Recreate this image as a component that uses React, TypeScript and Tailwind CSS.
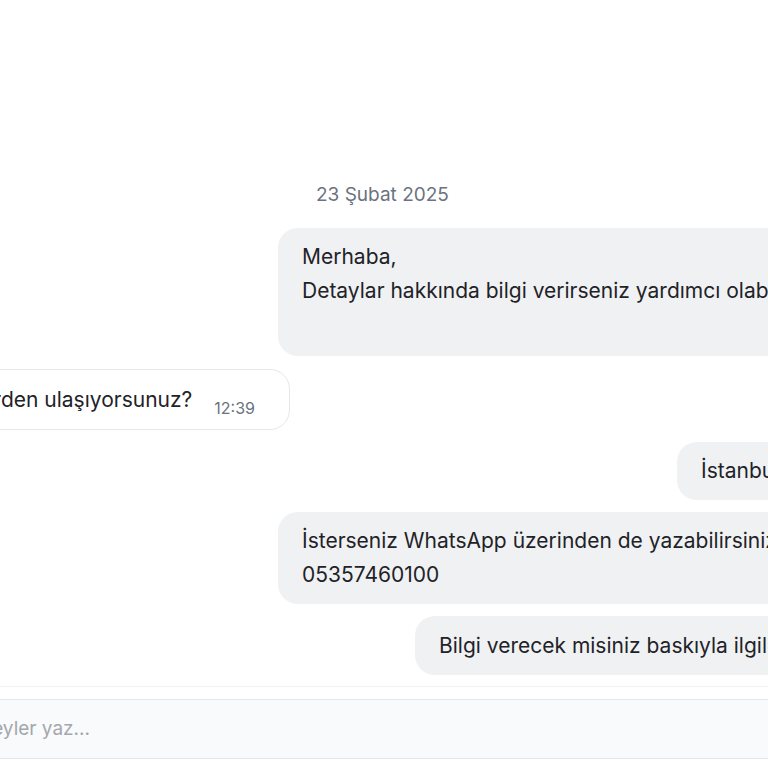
import React from "react";

export default function App() {
  return (
    <div className="w-[768px] h-[768px] overflow-hidden bg-white text-[#1f2328] font-['Inter','Noto_Sans',sans-serif] flex flex-col">
      <div className="pt-[184px] pl-[316px] text-[19px] leading-[22px] text-[#6b7280] whitespace-nowrap">
        23 Şubat 2025
      </div>

      <div className="mt-[22px] flex flex-col gap-3">
        <div className="ml-[278px] h-[128px] shrink-0 rounded-[20px] bg-[#f0f1f3] px-6 py-3 text-[21px] leading-[34px] whitespace-nowrap w-[900px]">
          <div>Merhaba,</div>
          <div>Detaylar hakkında bilgi verirseniz yardımcı olabiliriz.</div>
        </div>

        <div className="mt-[1px] w-[290px] flex justify-end">
          <div className="shrink-0 flex items-end whitespace-nowrap rounded-[20px] border border-[#e5e7eb] bg-white pl-6 pr-[34px] py-[12.5px]">
            <span className="text-[21px] leading-[34px]">Hangi şehirden ulaşıyorsunuz?</span>
            <span className="ml-[22px] text-[16px] leading-[18px] text-[#6b7280]">12:39</span>
          </div>
        </div>

        <div className="ml-[677px] w-[400px] shrink-0 rounded-[20px] bg-[#f0f1f3] px-6 py-3 text-[21px] leading-[34px] whitespace-nowrap">
          İstanbul
        </div>

        <div className="ml-[278px] w-[900px] shrink-0 rounded-[20px] bg-[#f0f1f3] px-6 py-3 text-[21px] leading-[34px] whitespace-nowrap">
          <div>İsterseniz WhatsApp üzerinden de yazabilirsiniz.</div>
          <div>05357460100</div>
        </div>

        <div className="ml-[415px] w-[800px] shrink-0 rounded-[20px] bg-[#f0f1f3] px-6 py-[12.5px] text-[21px] leading-[34px] whitespace-nowrap">
          Bilgi verecek misiniz baskıyla ilgili?
        </div>
      </div>

      <div className="mt-[11px] border-t border-[#f0f1f3]" />

      <div className="mt-[12px] h-[60px] border-y border-[#e5e7eb] bg-[#f9fafb] flex items-center">
        <div className="w-[90px] flex justify-end">
          <span className="shrink-0 whitespace-nowrap text-[19px] text-[#a3a7ad]">Bir şeyler yaz...</span>
        </div>
      </div>
    </div>
  );
}
